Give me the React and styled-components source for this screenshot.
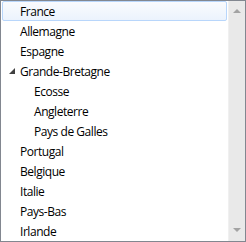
import React from 'react';
import styled, { createGlobalStyle } from 'styled-components';

const Global = createGlobalStyle`
  html, body {
    margin: 0;
    padding: 0;
    background: #ffffff;
  }
`;

const Frame = styled.div`
  box-sizing: border-box;
  width: 246px;
  height: 242px;
  border: 1px solid #828790;
  display: flex;
  background: #ffffff;
  font-family: "Segoe UI", "Open Sans", "Noto Sans", sans-serif;
  font-size: 12px;
  letter-spacing: -0.45px;
  color: #000000;
`;

const List = styled.div`
  flex: 1;
  display: flex;
  flex-direction: column;
  padding-left: 1px;
  padding-right: 1px;
`;

const Row = styled.div`
  box-sizing: border-box;
  height: 20px;
  display: flex;
  align-items: center;
  padding-left: ${(p) => 4 + p.level * 14}px;
  border: 1px solid ${(p) => (p.hot ? '#b8d6fb' : 'transparent')};
  border-radius: 2px;
  background: ${(p) => (p.hot ? 'linear-gradient(#fafbfd, #ebf3fd)' : 'transparent')};
  white-space: nowrap;
`;

const Toggle = styled.span`
  width: 13px;
  display: flex;
  align-items: center;
  justify-content: flex-start;
  padding-left: 2px;
  box-sizing: border-box;
`;

const Label = styled.span`
  line-height: 18px;
  padding-top: 1px;
`;

const Scrollbar = styled.div`
  width: 17px;
  background: #e9e9e9;
  border-left: 1px solid #f0f0f0;
  display: flex;
  flex-direction: column;
  justify-content: space-between;
  align-items: center;
  padding: 8px 0 9px;
  box-sizing: border-box;
`;

const Arrow = ({ down }) => (
  <svg width="8" height="4" viewBox="0 0 8 4">
    {down ? (
      <polygon points="0,0 8,0 4,4" fill="#a3a3a3" />
    ) : (
      <polygon points="4,0 8,4 0,4" fill="#a3a3a3" />
    )}
  </svg>
);

const Expanded = () => (
  <svg width="6" height="6" viewBox="0 0 6 6">
    <polygon points="6,0 6,6 0,6" fill="#404040" />
  </svg>
);

const items = [
  { label: 'France', level: 0, hot: true },
  { label: 'Allemagne', level: 0 },
  { label: 'Espagne', level: 0 },
  { label: 'Grande-Bretagne', level: 0, open: true },
  { label: 'Ecosse', level: 1 },
  { label: 'Angleterre', level: 1 },
  { label: 'Pays de Galles', level: 1 },
  { label: 'Portugal', level: 0 },
  { label: 'Belgique', level: 0 },
  { label: 'Italie', level: 0 },
  { label: 'Pays-Bas', level: 0 },
  { label: 'Irlande', level: 0 },
];

const App = () => {
  return (
    <>
      <Global />
      <Frame>
        <List>
          {items.map((it) => (
            <Row key={it.label} level={it.level} hot={it.hot}>
              <Toggle>{it.open && <Expanded />}</Toggle>
              <Label>{it.label}</Label>
            </Row>
          ))}
        </List>
        <Scrollbar>
          <Arrow />
          <Arrow down />
        </Scrollbar>
      </Frame>
    </>
  );
};

export default App;
